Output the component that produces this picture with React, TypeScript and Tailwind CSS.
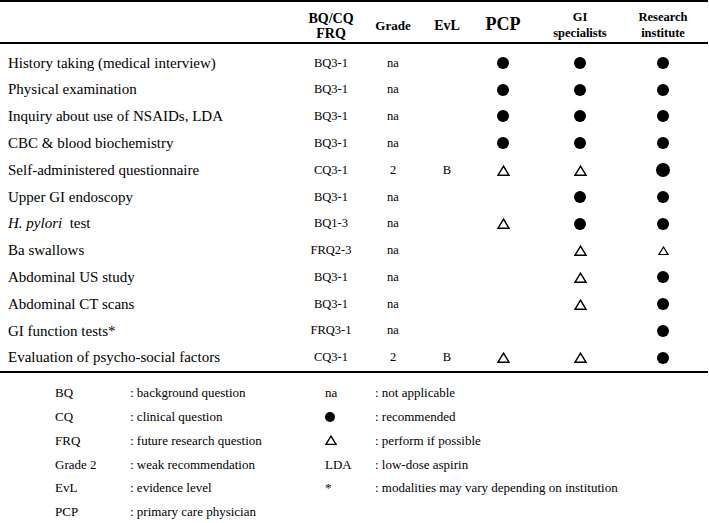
import React from "react";

type Mark = "dot" | "bigdot" | "tri" | "smalltri" | "";

const Dot = ({ size = 12 }: { size?: number }) => (
  <svg width={size} height={size} viewBox="0 0 12 12" className="block">
    <circle cx="6" cy="6" r="6" fill="#000" />
  </svg>
);

const Tri = ({ w = 13 }: { w?: number }) => (
  <svg width={w} height={w * 0.85} viewBox="0 0 13 11" className="block">
    <polygon points="6.5,1.2 12,10.2 1,10.2" fill="none" stroke="#000" strokeWidth="1.5" strokeLinejoin="miter" />
  </svg>
);

const MarkCell = ({ m }: { m: Mark }) => {
  if (m === "dot") return <Dot />;
  if (m === "bigdot") return <Dot size={14} />;
  if (m === "tri") return <Tri />;
  if (m === "smalltri") return <Tri w={11} />;
  return null;
};

type Row = {
  label: React.ReactNode;
  q: string;
  grade: string;
  evl: string;
  pcp: Mark;
  gi: Mark;
  ri: Mark;
};

const rows: Row[] = [
  { label: "History taking (medical interview)", q: "BQ3-1", grade: "na", evl: "", pcp: "dot", gi: "dot", ri: "dot" },
  { label: "Physical examination", q: "BQ3-1", grade: "na", evl: "", pcp: "dot", gi: "dot", ri: "dot" },
  { label: "Inquiry about use of NSAIDs, LDA", q: "BQ3-1", grade: "na", evl: "", pcp: "dot", gi: "dot", ri: "dot" },
  { label: "CBC & blood biochemistry", q: "BQ3-1", grade: "na", evl: "", pcp: "dot", gi: "dot", ri: "dot" },
  { label: "Self-administered questionnaire", q: "CQ3-1", grade: "2", evl: "B", pcp: "tri", gi: "tri", ri: "bigdot" },
  { label: "Upper GI endoscopy", q: "BQ3-1", grade: "na", evl: "", pcp: "", gi: "dot", ri: "dot" },
  {
    label: (
      <>
        <span className="italic">H. pylori</span>
        <span className="whitespace-pre">{"  test"}</span>
      </>
    ),
    q: "BQ1-3",
    grade: "na",
    evl: "",
    pcp: "tri",
    gi: "dot",
    ri: "dot",
  },
  { label: "Ba swallows", q: "FRQ2-3", grade: "na", evl: "", pcp: "", gi: "tri", ri: "smalltri" },
  { label: "Abdominal US study", q: "BQ3-1", grade: "na", evl: "", pcp: "", gi: "tri", ri: "dot" },
  { label: "Abdominal CT scans", q: "BQ3-1", grade: "na", evl: "", pcp: "", gi: "tri", ri: "dot" },
  { label: "GI function tests*", q: "FRQ3-1", grade: "na", evl: "", pcp: "", gi: "", ri: "dot" },
  { label: "Evaluation of psycho-social factors", q: "CQ3-1", grade: "2", evl: "B", pcp: "tri", gi: "tri", ri: "dot" },
];

const cols = "grid grid-cols-[296px_70px_54px_54px_58px_96px_70px]";

const legend: [React.ReactNode, string, React.ReactNode, string][] = [
  ["BQ", ": background question", "na", ": not applicable"],
  ["CQ", ": clinical question", <Dot size={10} />, ": recommended"],
  ["FRQ", ": future research question", <Tri w={12} />, ": perform if possible"],
  ["Grade 2", ": weak recommendation", "LDA", ": low-dose aspirin"],
  ["EvL", ": evidence level", "*", ": modalities may vary depending on institution"],
  ["PCP", ": primary care physician", "", ""],
];

export default function App() {
  return (
    <div
      className="w-[709px] h-[523px] bg-white text-black overflow-hidden"
      style={{ fontFamily: '"Liberation Serif", "Times New Roman", serif' }}
    >
      <div className="w-[708px] border-t-2 border-b-2 border-black">
        {/* header */}
        <div className={`${cols} h-[42px] border-b-2 border-black font-bold items-center text-center`}>
          <div />
          <div className="text-[14px] leading-[15px] pt-[7px]">
            BQ/CQ
            <br />
            FRQ
          </div>
          <div className="text-[13px] pt-[7px]">Grade</div>
          <div className="text-[14px] pt-[6px]">EvL</div>
          <div className="text-[18px] pt-[5px]">PCP</div>
          <div className="text-[12.5px] leading-[16px] pt-[6px]">
            GI
            <br />
            specialists
          </div>
          <div className="text-[12.5px] leading-[16px] pt-[6px]">
            Research
            <br />
            institute
          </div>
        </div>
        {/* body */}
        <div className="pt-[5.5px]">
          {rows.map((r, i) => (
            <div key={i} className={`${cols} h-[26.8px] items-center`}>
              <div className="pl-[8px] text-[15px] whitespace-nowrap">{r.label}</div>
              <div className="text-center text-[12.5px]">{r.q}</div>
              <div className="text-center text-[12.5px]">{r.grade}</div>
              <div className="text-center text-[12.5px]">{r.evl}</div>
              <div className="flex justify-center">
                <MarkCell m={r.pcp} />
              </div>
              <div className="flex justify-center">
                <MarkCell m={r.gi} />
              </div>
              <div className="flex justify-center">
                <MarkCell m={r.ri} />
              </div>
            </div>
          ))}
        </div>
      </div>
      {/* legend */}
      <div className="pt-[8px] text-[13px]">
        {legend.map((l, i) => (
          <div key={i} className="grid grid-cols-[55px_75px_195px_50px_1fr] h-[23.8px] items-center">
            <div />
            <div>{l[0]}</div>
            <div>{l[1]}</div>
            <div className="flex items-center">{l[2]}</div>
            <div>{l[3]}</div>
          </div>
        ))}
      </div>
    </div>
  );
}
